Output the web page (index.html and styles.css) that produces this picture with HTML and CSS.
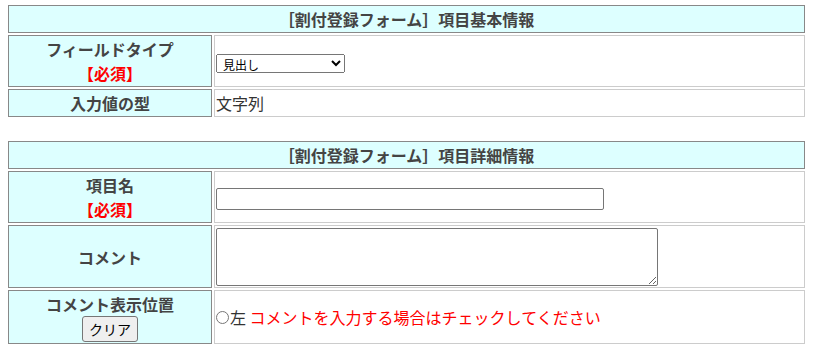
FILE: index.html
```html
<!DOCTYPE html>
<html lang="ja">
<head>
    <meta charset="UTF-8">
    <title>割付登録フォーム</title>
    <link rel="stylesheet" href="styles.css">
</head>
<body>
    <!-- 項目基本情報 -->
    <table class="form-table">
        <tr>
            <th colspan="2" class="caption">［割付登録フォーム］項目基本情報</th>
        </tr>
        <tr class="row-double">
            <th class="label">フィールドタイプ<br><span class="required">【必須】</span></th>
            <td class="value">
                <select class="type-select">
                    <option value="heading">見出し</option>
                    <option value="text">テキスト</option>
                    <option value="textarea">テキストエリア</option>
                </select>
            </td>
        </tr>
        <tr>
            <th class="label">入力値の型</th>
            <td class="value">文字列</td>
        </tr>
    </table>

    <!-- 項目詳細情報 -->
    <table class="form-table">
        <tr>
            <th colspan="2" class="caption">［割付登録フォーム］項目詳細情報</th>
        </tr>
        <tr class="row-double">
            <th class="label">項目名<br><span class="required">【必須】</span></th>
            <td class="value"><input type="text" class="name-input"></td>
        </tr>
        <tr class="row-comment">
            <th class="label">コメント</th>
            <td class="value"><textarea class="comment-area"></textarea></td>
        </tr>
        <tr class="row-double-wide">
            <th class="label">コメント表示位置<br><button type="button" class="clear-btn">クリア</button></th>
            <td class="value">
                <label class="radio-label"><input type="radio" name="commentPos" class="radio">左</label>
                <span class="note">コメントを入力する場合はチェックしてください</span>
            </td>
        </tr>
    </table>
</body>
</html>
```

FILE: styles.css
```css
body {
    margin: 3px 6px;
    font-family: "Noto Sans CJK JP", sans-serif;
    font-size: 16px;
    line-height: 24px;
    color: #333;
    background-color: #fff;
}
.form-table {
    width: 801px;
    border-spacing: 2px;
}
.form-table + .form-table {
    margin-top: 20px;
}
.form-table th {
    background-color: #dff;
    border: 1px solid #888;
    padding: 1px;
    color: #444;
    font-weight: bold;
    text-align: center;
    vertical-align: middle;
}
.form-table td {
    border: 1px solid #ccc;
    padding: 1px;
    vertical-align: middle;
}
.label {
    width: 200px;
}
.required {
    color: #f00;
}
.row-double {
    height: 52px;
}
.row-double-wide {
    height: 54px;
}
.row-comment {
    height: 63px;
}
.type-select {
    width: 129px;
    height: 19px;
    font-family: "Noto Sans CJK JP", sans-serif;
    font-size: 12px;
    padding: 0 0 0 2px;
    color: #000;
    vertical-align: middle;
}
.name-input {
    box-sizing: border-box;
    width: 388px;
    height: 22px;
    border: 1px solid #767676;
    border-radius: 2px;
    vertical-align: middle;
}
.comment-area {
    display: block;
    box-sizing: border-box;
    width: 442px;
    height: 58px;
    border: 1px solid #767676;
    border-radius: 2px;
}
.clear-btn {
    display: block;
    margin: 0 auto;
    box-sizing: border-box;
    height: 26px;
    padding: 0 6px;
    font-family: "Noto Sans CJK JP", sans-serif;
    font-size: 14px;
    color: #000;
    background-color: #efefef;
    border: 1px solid #767676;
    border-radius: 3px;
}
.radio {
    width: 13px;
    height: 13px;
    margin: 0 1px 0 0;
    vertical-align: 0;
}
.note {
    color: #f00;
}
```
